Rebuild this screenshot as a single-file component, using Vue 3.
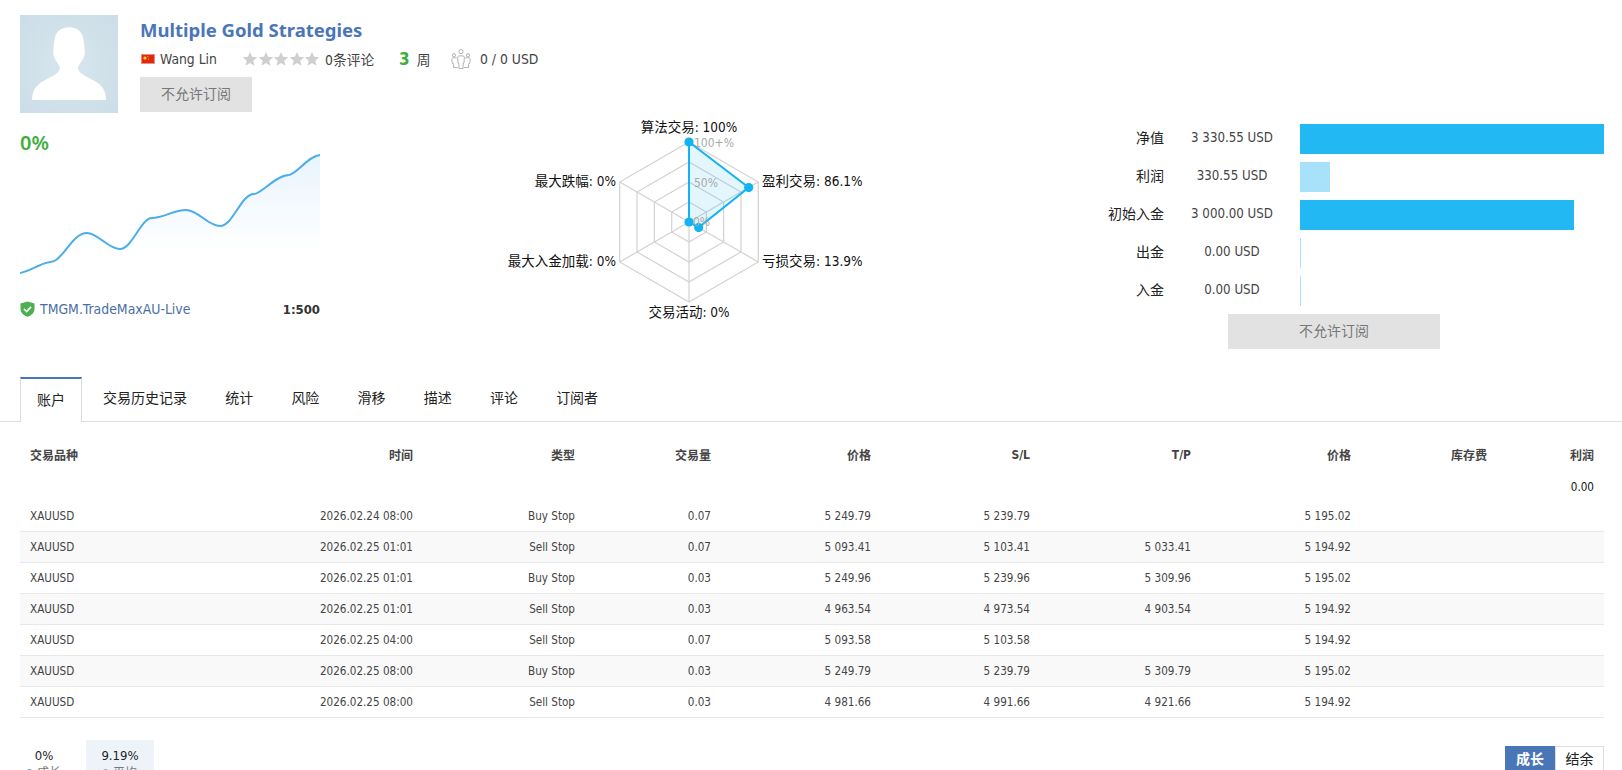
<script setup>
const stats = [
  { label: '净值', value: '3 330.55 USD', w: 304, cls: 'strong' },
  { label: '利润', value: '330.55 USD', w: 30, cls: 'soft' },
  { label: '初始入金', value: '3 000.00 USD', w: 274, cls: 'strong' },
  { label: '出金', value: '0.00 USD', w: 1, cls: 'soft' },
  { label: '入金', value: '0.00 USD', w: 1, cls: 'soft' }
]
const tabs = ['账户', '交易历史记录', '统计', '风险', '滑移', '描述', '评论', '订阅者']
const heads = ['交易品种', '时间', '类型', '交易量', '价格', 'S/L', 'T/P', '价格', '库存费', '利润']
const rows = [
  ['XAUUSD', '2026.02.24 08:00', 'Buy Stop', '0.07', '5 249.79', '5 239.79', '', '5 195.02'],
  ['XAUUSD', '2026.02.25 01:01', 'Sell Stop', '0.07', '5 093.41', '5 103.41', '5 033.41', '5 194.92'],
  ['XAUUSD', '2026.02.25 01:01', 'Buy Stop', '0.03', '5 249.96', '5 239.96', '5 309.96', '5 195.02'],
  ['XAUUSD', '2026.02.25 01:01', 'Sell Stop', '0.03', '4 963.54', '4 973.54', '4 903.54', '5 194.92'],
  ['XAUUSD', '2026.02.25 04:00', 'Sell Stop', '0.07', '5 093.58', '5 103.58', '', '5 194.92'],
  ['XAUUSD', '2026.02.25 08:00', 'Buy Stop', '0.03', '5 249.79', '5 239.79', '5 309.79', '5 195.02'],
  ['XAUUSD', '2026.02.25 08:00', 'Sell Stop', '0.03', '4 981.66', '4 991.66', '4 921.66', '5 194.92']
]
const widths = [150, 253, 162, 136, 160, 159, 161, 160, 136, 107]
const stars = [0, 1, 2, 3, 4]

const cx = 689
const cy = 222
const angles = [0, 1, 2, 3, 4, 5].map(i => (Math.PI / 3) * i)
const pt = (r, a) => [cx + r * Math.sin(a), cy - r * Math.cos(a)]
const ring = r => angles.map(a => pt(r, a).map(n => n.toFixed(1)).join(',')).join(' ')
const rings = [80, 60, 40, 20].map(ring)
const spokes = angles.map(a => pt(80, a))
const dots = [pt(80, angles[0]), pt(68.9, angles[1]), pt(11.1, angles[2]), [cx, cy]]
const dataPoly = dots.map(p => p.map(n => n.toFixed(1)).join(',')).join(' ')

const line = 'M20 273 C28 272 38 265 46 263 C50 262 53 262 56 260 C66 253 74 233 87 233 C98 233 108 249 120 249 C132 249 141 218 152 218 C163 218 174 210 186 210 C198 210 208 226 220 226 C233 226 241 194 254 194 C261 194 276 175 289 175 C298 173 308 156 320 155'
const area = line + ' L320 280 L20 280 Z'
</script>

<template>
  <div class="page">
    <header class="head">
      <div class="avatar">
        <svg viewBox="0 0 98 98" width="98" height="98">
          <defs>
            <radialGradient id="av" cx="50%" cy="50%" r="70%">
              <stop offset="0" stop-color="#d8e6ee" />
              <stop offset="1" stop-color="#cbdde7" />
            </radialGradient>
          </defs>
          <rect width="98" height="98" fill="url(#av)" />
          <path d="M12 85 C12 74 17 69 27 64 C35 60 40 57 40 53 C40 50 37 48 35 44 C33 41 33 36 33.5 33 C33.5 30 34 27 35 23 C36 16 42 12.3 49 12.3 C56 12.3 62 16 63 23 C64 27 64.5 30 64.5 33 C65 36 65 41 63 44 C61 48 58 50 58 53 C58 57 63 60 71 64 C81 69 86 74 86 85 Z" fill="#fff" />
        </svg>
      </div>
      <div class="info">
        <h1 class="title">Multiple Gold Strategies</h1>
        <div class="meta">
          <svg class="flag" viewBox="0 0 14 10" width="14" height="10">
            <rect width="14" height="10" fill="#de2910" />
            <rect x="0.5" y="0.5" width="13" height="9" fill="none" stroke="#f08a7c" />
            <circle cx="4" cy="4" r="1.6" fill="#ffde00" />
            <circle cx="7" cy="2.5" r="0.5" fill="#ffde00" />
            <circle cx="7.5" cy="5" r="0.5" fill="#ffde00" />
          </svg>
          <span class="author">Wang Lin</span>
          <span class="stars">
            <svg v-for="s in stars" :key="s" viewBox="0 0 16 16" width="16" height="16">
              <path d="M8 1 L10.1 5.8 L15.2 6.3 L11.3 9.7 L12.5 14.8 L8 12.1 L3.5 14.8 L4.7 9.7 L0.8 6.3 L5.9 5.8 Z" fill="#cfcfcf" />
            </svg>
          </span>
          <span class="reviews">0条评论</span>
          <span class="weeks"><b>3</b> 周</span>
          <svg class="users" viewBox="0 0 20 20" width="20" height="20" fill="none" stroke="#aaa" stroke-width="0.9">
            <circle cx="10" cy="2.6" r="2.1" />
            <circle cx="3" cy="6.2" r="1.6" />
            <circle cx="17" cy="6.2" r="1.6" />
            <path d="M6.6 8 C6.6 6.4 13.4 6.4 13.4 8 L13 14 L12.2 14 L12 19.5 L8 19.5 L7.8 14 L7 14 Z" />
            <path d="M5.6 9 C2 8.2 0.7 9 0.7 10.5 L1.4 14.5 L2.3 14.5 L2.5 18.5 L6.8 18.5" />
            <path d="M14.4 9 C18 8.2 19.3 9 19.3 10.5 L18.6 14.5 L17.7 14.5 L17.5 18.5 L13.2 18.5" />
          </svg>
          <span class="subs">0 / 0 USD</span>
        </div>
        <button class="deny small" type="button">不允许订阅</button>
      </div>
    </header>

    <section class="summary">
      <div class="growth">
        <div class="pct">0%</div>
        <svg class="spark" viewBox="20 150 300 130" width="300" height="130">
          <defs>
            <linearGradient id="fill" x1="0" y1="0" x2="0" y2="1">
              <stop offset="0" stop-color="#e8f4fd" />
              <stop offset="0.78" stop-color="#ffffff" />
            </linearGradient>
          </defs>
          <path :d="area" fill="url(#fill)" />
          <path :d="line" fill="none" stroke="#4aaeea" stroke-width="2" />
        </svg>
        <div class="server">
          <span class="server-name">
            <svg viewBox="0 0 15 16" width="15" height="16">
              <path d="M7.5 0.5 L14.5 2.5 L14.5 8 C14.5 12 11 14.6 7.5 15.8 C4 14.6 0.5 12 0.5 8 L0.5 2.5 Z" fill="#4caf50" />
              <path d="M4 8 L6.6 10.5 L11 5.8" fill="none" stroke="#fff" stroke-width="1.7" />
            </svg>
            <a class="link">TMGM.TradeMaxAU-Live</a>
          </span>
          <b class="leverage">1:500</b>
        </div>
      </div>

      <svg class="radar" viewBox="490 113 400 210" width="400" height="210">
        <polygon v-for="(r, i) in rings" :key="i" :points="r" fill="none" stroke="#d2d2d2" stroke-width="1.2" />
        <line v-for="(s, i) in spokes" :key="'s' + i" :x1="cx" :y1="cy" :x2="s[0]" :y2="s[1]" stroke="#d2d2d2" stroke-width="1.2" />
        <polygon :points="dataPoly" fill="#1ab3f0" fill-opacity="0.12" stroke="#12b3f2" stroke-width="2" />
        <circle v-for="(d, i) in dots" :key="'d' + i" :cx="d[0]" :cy="d[1]" r="4.6" fill="#12b3f2" />
        <text class="tick" x="694" y="147">100+%</text>
        <text class="tick" x="694" y="187">50%</text>
        <text class="tick" x="693" y="226">0%</text>
        <text class="axis" x="689" y="132" text-anchor="middle">算法交易: 100%</text>
        <text class="axis" x="762" y="186">盈利交易: 86.1%</text>
        <text class="axis" x="762" y="266">亏损交易: 13.9%</text>
        <text class="axis" x="689" y="317" text-anchor="middle">交易活动: 0%</text>
        <text class="axis" x="616" y="186" text-anchor="end">最大跌幅: 0%</text>
        <text class="axis" x="616" y="266" text-anchor="end">最大入金加载: 0%</text>
      </svg>

      <div class="stats">
        <div class="stat-grid">
          <template v-for="s in stats" :key="s.label">
            <div class="stat-label">{{ s.label }}</div>
            <div class="stat-value">{{ s.value }}</div>
            <div class="bar-track"><div class="bar" :class="s.cls" :style="{ width: s.w + 'px' }"></div></div>
          </template>
        </div>
        <button class="deny large" type="button">不允许订阅</button>
      </div>
    </section>

    <nav class="tabs">
      <a v-for="(t, i) in tabs" :key="t" class="tab" :class="{ active: i === 0 }">{{ t }}</a>
    </nav>

    <div class="table-wrap">
      <table class="orders">
        <colgroup>
          <col v-for="(w, i) in widths" :key="i" :style="{ width: w + 'px' }" />
        </colgroup>
        <thead>
          <tr class="head-row">
            <th v-for="(h, i) in heads" :key="i" :class="{ first: i === 0 }">{{ h }}</th>
          </tr>
        </thead>
        <tbody>
          <tr class="total">
            <td colspan="10" class="total-cell">0.00</td>
          </tr>
          <tr v-for="(r, i) in rows" :key="i" class="row" :class="{ alt: i % 2 === 1 }">
            <td v-for="(c, j) in r" :key="j" :class="{ first: j === 0 }">{{ c }}</td>
            <td></td>
            <td></td>
          </tr>
        </tbody>
      </table>
    </div>

    <footer class="foot">
      <div class="modes">
        <div class="mode">
          <div class="mode-val">0%</div>
          <div class="mode-key"><i class="dot blue"></i>成长</div>
        </div>
        <div class="mode selected">
          <div class="mode-val">9.19%</div>
          <div class="mode-key"><i class="dot grey"></i>平均</div>
        </div>
      </div>
      <div class="toggle">
        <span class="tg on">成长</span>
        <span class="tg">结余</span>
      </div>
    </footer>
  </div>
</template>

<style>
html, body { margin: 0; background: #fff; overflow: hidden; }
</style>

<style scoped>
.page {
  width: 1622px;
  height: 770px;
  overflow: hidden;
  font-family: "DejaVu Sans Condensed", "DejaVu Sans", "Noto Sans CJK SC", sans-serif;
  font-stretch: condensed;
  font-size: 12px;
  color: #333;
  background: #fff;
}
.head { display: flex; padding: 15px 0 0 20px; height: 98px; box-sizing: content-box; }
.avatar { width: 98px; height: 98px; margin-right: 22px; }
.avatar svg { display: block; }
.info { display: flex; flex-direction: column; align-items: flex-start; }
.title {
  margin: 0;
  height: 29px;
  line-height: 29px;
  font-family: "Noto Sans", sans-serif;
  font-stretch: normal;
  font-size: 18.5px;
  font-weight: 700;
  color: #4a76b8;
}
.meta { display: flex; align-items: center; height: 30px; margin-left: 1px; font-size: 13.8px; color: #444; }
.flag { margin-right: 5px; }
.author { width: 82px; }
.stars { display: flex; width: 83px; }
.stars svg { display: block; flex: none; margin-right: -0.4px; }
.reviews { width: 74px; font-family: "DejaVu Sans Condensed", "Noto Sans CJK SC", sans-serif; white-space: nowrap; }
.weeks { display: flex; align-items: center; gap: 7px; width: 52px; }
.weeks b { color: #3fae3f; font-size: 17px; font-weight: 700; }
.users { margin-right: 9px; }
.subs { white-space: nowrap; }
.deny {
  border: 0;
  padding: 0 0 4px;
  background: #e2e2e2;
  color: #777;
  font-family: "Noto Sans CJK SC", sans-serif;
  font-size: 14px;
  cursor: default;
}
.deny.small { width: 112px; height: 35px; margin-top: 3px; }
.deny.large { display: block; width: 212px; height: 35px; margin: 8px 0 0 128px; }
.summary { display: flex; height: 264px; padding: 0 18px 0 20px; }
.growth { width: 300px; flex: none; }
.pct { margin-top: 15px; height: 30px; line-height: 30px; font-size: 20px; font-weight: 600; color: #3fae3f; font-family: "Noto Sans", sans-serif; font-stretch: normal; }
.spark { display: block; margin-top: -8px; }
.server { display: flex; justify-content: space-between; align-items: center; height: 20px; margin-top: 19px; }
.server-name { display: flex; align-items: center; gap: 5px; }
.server-name svg { display: block; }
.link { color: #4a6fa5; font-size: 13.9px; }
.leverage { font-size: 13px; color: #333; }
.radar { display: block; flex: none; margin-left: 170px; }
.tick { font-size: 12px; fill: #a9a9a9; font-family: "DejaVu Sans Condensed", sans-serif; font-stretch: condensed; }
.axis { font-size: 13.5px; fill: #111; font-family: "DejaVu Sans Condensed", "Noto Sans CJK SC", sans-serif; font-stretch: condensed; }
.stats { margin-left: auto; padding-top: 11px; width: 504px; }
.stat-grid { display: grid; grid-template-columns: 64px 136px 304px; row-gap: 8px; grid-auto-rows: 30px; align-items: center; }
.stat-label { text-align: right; font-family: "Noto Sans CJK SC", sans-serif; font-size: 14px; color: #222; white-space: nowrap; padding-bottom: 4px; }
.stat-value { text-align: center; font-size: 13.2px; color: #444; padding-bottom: 3px; }
.bar-track { height: 30px; }
.bar { height: 30px; }
.bar.strong { background: #21b8f3; }
.bar.soft { background: #a8e2fa; }
.tabs { display: flex; height: 44px; padding-left: 20px; border-bottom: 1px solid #ddd; }
.tab {
  display: flex;
  align-items: center;
  height: 44px;
  padding: 0 18px 4px;
  margin-right: 2.2px;
  font-family: "Noto Sans CJK SC", sans-serif;
  font-size: 14px;
  color: #222;
  box-sizing: border-box;
}
.tab.active {
  height: 45px;
  width: 62px;
  padding: 0 16px 4px;
  margin-right: 3px;
  justify-content: center;
  background: #fff;
  border: 1px solid #ddd;
  border-top: 2px solid #4a76b8;
  border-bottom: 0;
}
.table-wrap { padding: 17px 18px 0 20px; }
.orders { width: 1584px; table-layout: fixed; border-collapse: collapse; }
.orders th, .orders td { padding: 0 10px; text-align: right; white-space: nowrap; box-sizing: border-box; }
.orders th {
  height: 31px;
  font-size: 12px;
  font-weight: 700;
  color: #444;
  font-family: "DejaVu Sans Condensed", "Noto Sans CJK SC", sans-serif;
}
.orders .first { text-align: left; }
.total-cell { height: 30px; padding-top: 3px !important; font-size: 11.6px; color: #111; }
.row td { height: 31px; border-bottom: 1px solid #e8e8e8; font-size: 11.6px; color: #444; }
.total + .row td { padding-top: 2px; }
.row.alt { background: #f9f9f9; }
.foot { display: flex; justify-content: space-between; padding: 22px 18px 0 20px; }
.modes { display: flex; gap: 18px; }
.mode { width: 48px; text-align: center; padding-top: 7px; height: 40px; border-radius: 2px; }
.mode.selected { width: 68px; background: #eef3fa; }
.mode-val { font-size: 13px; color: #222; line-height: 18px; }
.mode-key { font-family: "Noto Sans CJK SC", sans-serif; font-size: 12px; color: #777; line-height: 14px; display: flex; justify-content: center; align-items: center; gap: 5px; }
.dot { display: block; width: 5px; height: 5px; border-radius: 50%; }
.dot.blue { background: #6f9bd4; }
.dot.grey { background: #aaa; }
.toggle { display: flex; margin-top: 6px; height: 40px; font-family: "Noto Sans CJK SC", sans-serif; font-size: 14px; }
.tg { box-sizing: border-box; width: 49px; height: 40px; padding-top: 1px; text-align: center; border: 1px solid #ddd; color: #222; }
.tg.on { width: 50px; background: #4a76b8; border-color: #4a76b8; color: #fff; font-weight: 700; }
</style>
